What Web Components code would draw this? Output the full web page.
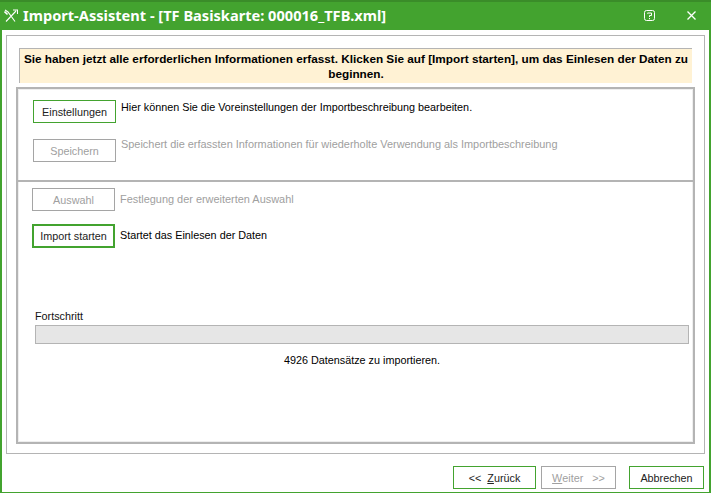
<!DOCTYPE html>
<html lang="de">
<head>
<meta charset="utf-8">
<title>Import-Assistent</title>
<style>
  html, body { margin: 0; height: 100%; background: #fff; }
  body { font: 10.8px "Liberation Sans", sans-serif; color: #000; }
</style>
</head>
<body>
<template id="wiz-window-tpl">
  <style>
    :host { display: flex; flex-direction: column; box-sizing: border-box; width: 711px; height: 493px; border: solid #43a32f; border-width: 0 2px 1px 2px; background: #fff; }
    header { display: flex; align-items: center; height: 26px; margin: 0 -2px; padding: 0 0 2px 4px; gap: 5px; background: #43a32f; border-top: 2px solid #3a8c29; box-sizing: content-box; color: #fff; }
    h1 { flex: 1; margin: 0; font: bold 14.6px "Noto Sans", sans-serif; white-space: nowrap; }
    svg { display: block; flex: none; }
    .main { flex: 1; display: flex; flex-direction: column; min-height: 0; padding: 5px 4px 0 4px; }
    .foot { display: flex; height: 38px; box-sizing: border-box; padding: 11px 3px 0 0; justify-content: flex-end; }
    .help { margin-right: 27px; }
    .close { margin-right: 15px; }
  </style>
  <header>
    <svg width="14" height="13" viewBox="0 0 14 13" fill="none" stroke="#fff" stroke-width="1.1"><path d="M1 1l3 2 7 9.500M12 2L2 12.500M9 1h4.500V5"/><path d="M.5 2.500l3 3" stroke-width="1.600"/></svg>
    <h1><slot name="title"></slot></h1>
    <svg class="help" width="11" height="11" viewBox="0 0 11 11" fill="none" stroke="#fff"><rect x=".5" y=".5" width="10" height="10" rx="2"/><path d="M3.500 3.500V3h4v2.500h-2V7M5.500 8v1.200"/></svg>
    <svg class="close" width="9" height="9" viewBox="0 0 9 9" fill="none" stroke="#fff" stroke-width="1.300"><path d="M.5.500l8 8M8.500.500l-8 8"/></svg>
  </header>
  <div class="main"><slot></slot></div>
  <div class="foot"><slot name="foot"></slot></div>
</template>

<template id="wiz-frame-tpl">
  <style>
    :host { display: flex; flex-direction: column; flex: 1; min-height: 0; box-sizing: border-box; border: 1px solid #b4b4b4; padding: 12px 9px 9px 9px; }
    .banner { margin: 0 3px 4px 3px; height: 35px; box-sizing: border-box; background: #fff2d4; border-top: 1px solid #b4b4b4; border-left: 1px solid #b4b4b4; text-align: center; font-weight: bold; font-size: 11.75px; line-height: 15px; padding-top: 2px; }
    .panels { flex: 1; display: flex; flex-direction: column; min-height: 0; border: 2px solid #b4b4b4; box-shadow: inset 1px 1px 0 #eee, inset -1px -1px 0 #eee; }
  </style>
  <div class="banner"><slot name="banner"></slot></div>
  <div class="panels"><slot></slot></div>
</template>

<template id="wiz-panel-tpl">
  <style>
    :host { display: flex; flex-direction: column; box-sizing: border-box; gap: 16px; padding: var(--pad, 11px 14px 0 15px); }
    :host([grow]) { flex: 1; border-top: 2px solid #b4b4b4; }
  </style>
  <slot></slot>
</template>

<template id="wiz-row-tpl">
  <style>
    :host { display: flex; align-items: flex-start; gap: 5px; color: #000; }
    :host([off]) { color: #a0a0a0; font-size: 10.93px; }
    span { line-height: 15px; margin-top: var(--dy, 0); }
  </style>
  <slot name="btn"></slot><span><slot></slot></span>
</template>

<template id="wiz-button-tpl">
  <style>
    :host { display: flex; align-items: center; justify-content: center; box-sizing: border-box; width: var(--w, 83px); height: 23px; border: 1px solid #43a32f; background: #fff; color: #222; font-size: 10.8px; white-space: nowrap; cursor: default; }
    :host([off]) { border-color: #a5a5a5; color: #a0a0a0; }
    :host([strong]) { border-width: 2px; height: 24px; }
  </style>
  <slot></slot>
</template>

<template id="wiz-progress-tpl">
  <style>
    :host { display: block; margin-top: 48px; padding: 0 2px 0 3px; }
    .label { line-height: 15px; margin-bottom: 1px; color: #111; }
    .bar { height: 19px; box-sizing: border-box; border: 1px solid #b4b4b4; background: #e6e6e6; }
    .note { text-align: center; margin-top: 9px; line-height: 15px; color: #000; }
  </style>
  <div class="label"><slot name="label"></slot></div>
  <div class="bar"></div>
  <div class="note"><slot></slot></div>
</template>

<wiz-window>
  <span slot="title">Import-Assistent - [TF Basiskarte: 000016_TFB.xml]</span>
  <wiz-frame>
    <span slot="banner">Sie haben jetzt alle erforderlichen Informationen erfasst. Klicken Sie auf [Import starten], um das Einlesen der Daten zu beginnen.</span>
    <wiz-panel style="height: 91px">
      <wiz-row>
        <wiz-button slot="btn">Einstellungen</wiz-button>
        Hier können Sie die Voreinstellungen der Importbeschreibung bearbeiten.
      </wiz-row>
      <wiz-row off style="--dy: -2px">
        <wiz-button slot="btn" off>Speichern</wiz-button>
        Speichert die erfassten Informationen für wiederholte Verwendung als Importbeschreibung
      </wiz-row>
    </wiz-panel>
    <wiz-panel grow style="--pad: 6px 2px 0 14px; --dy: 4px; gap: 13px">
      <wiz-row off>
        <wiz-button slot="btn" off>Auswahl</wiz-button>
        Festlegung der erweiterten Auswahl
      </wiz-row>
      <wiz-row>
        <wiz-button slot="btn" strong>Import starten</wiz-button>
        Startet das Einlesen der Daten
      </wiz-row>
      <wiz-progress>
        <span slot="label">Fortschritt</span>
        4926 Datensätze zu importieren.
      </wiz-progress>
    </wiz-panel>
  </wiz-frame>
  <wiz-button slot="foot" style="margin-right: 5px; margin-top: 1px">&lt;&lt;&nbsp;&nbsp;<u>Z</u>urück</wiz-button>
  <wiz-button slot="foot" off style="--w: 75px; margin-right: 13px; margin-top: 1px"><u>W</u>eiter&nbsp;&nbsp;&nbsp;&gt;&gt;</wiz-button>
  <wiz-button slot="foot" style="--w: 75px; margin-right: 2px; margin-top: 1px">Abbrechen</wiz-button>
</wiz-window>

<script>
  class WizBase extends HTMLElement {
    constructor() {
      super();
      const tpl = document.getElementById(this.localName + '-tpl');
      this.attachShadow({ mode: 'open' }).appendChild(tpl.content.cloneNode(true));
    }
  }
  for (const name of ['wiz-window', 'wiz-frame', 'wiz-panel', 'wiz-row', 'wiz-button', 'wiz-progress']) {
    customElements.define(name, class extends WizBase {});
  }
</script>
</body>
</html>
